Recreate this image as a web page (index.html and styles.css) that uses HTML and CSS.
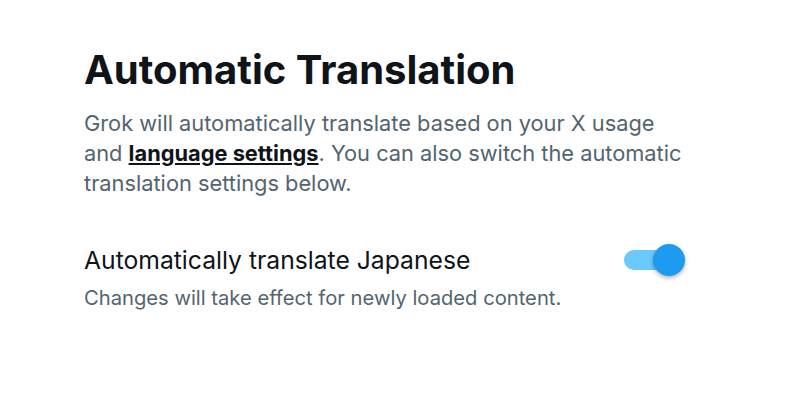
FILE: index.html
```html
<!DOCTYPE html>
<html>
<head>
<meta charset="utf-8">
<link rel="stylesheet" href="styles.css">
</head>
<body>
<main class="page">
  <h1 class="title">Automatic Translation</h1>
  <p class="intro">Grok will automatically translate based on your X usage and <a class="link" href="#">language settings</a>. You can also switch the automatic translation settings below.</p>
  <section class="setting">
    <div class="setting-row">
      <span class="setting-label">Automatically translate Japanese</span>
      <span class="toggle"><span class="track"></span><span class="knob"></span></span>
    </div>
    <p class="setting-note">Changes will take effect for newly loaded content.</p>
  </section>
</main>
</body>
</html>
```
FILE: styles.css
```css
* { box-sizing: border-box; }
html, body { margin: 0; background: #fff; }
body { font-family: Inter, sans-serif; }
.page {
  padding: 46px 0 0 84px;
  width: 685px;
}
.title {
  margin: 0;
  font-size: 40px;
  line-height: 48px;
  font-weight: 700;
  color: #0f1419;
}
.intro {
  margin: 14px 0 0;
  font-size: 21.8px;
  line-height: 30px;
  color: #536471;
}
.link {
  color: #0f1419;
  font-weight: 700;
  text-decoration: underline;
}
.setting { margin-top: 42px; }
.setting-row {
  display: flex;
  align-items: center;
  justify-content: space-between;
  height: 40px;
}
.setting-label {
  font-size: 24.7px;
  color: #0f1419;
}
.toggle {
  position: relative;
  width: 62px;
  height: 32px;
  display: block;
}
.track {
  position: absolute;
  left: 1px;
  top: 6px;
  width: 56px;
  height: 20px;
  border-radius: 10px;
  background: #6bc9fb;
}
.knob {
  position: absolute;
  right: 0;
  top: 0;
  width: 32px;
  height: 32px;
  border-radius: 50%;
  background: #1d9bf0;
  box-shadow: 0 2px 4px rgba(0,0,0,0.3);
}
.setting-note {
  margin: 5px 0 0;
  font-size: 20.2px;
  line-height: 26px;
  color: #536471;
}
```
